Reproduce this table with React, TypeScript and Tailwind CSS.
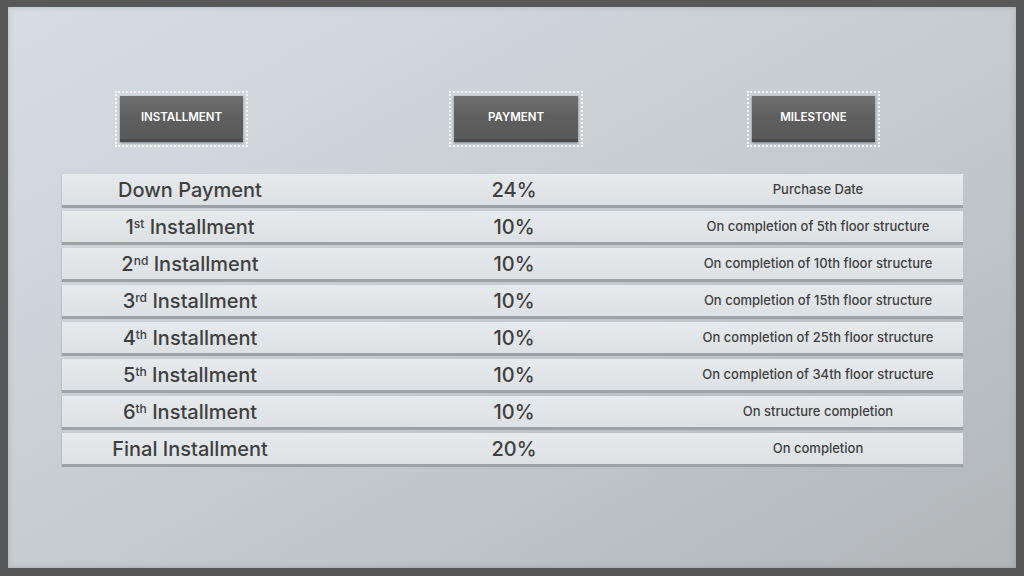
import React from "react";

type Row = {
  num?: string;
  sup?: string;
  label: string;
  payment: string;
  milestone: string;
};

const rows: Row[] = [
  { label: "Down Payment", payment: "24%", milestone: "Purchase Date" },
  { num: "1", sup: "st", label: "Installment", payment: "10%", milestone: "On completion of 5th floor structure" },
  { num: "2", sup: "nd", label: "Installment", payment: "10%", milestone: "On completion of 10th floor structure" },
  { num: "3", sup: "rd", label: "Installment", payment: "10%", milestone: "On completion of 15th floor structure" },
  { num: "4", sup: "th", label: "Installment", payment: "10%", milestone: "On completion of 25th floor structure" },
  { num: "5", sup: "th", label: "Installment", payment: "10%", milestone: "On completion of 34th floor structure" },
  { num: "6", sup: "th", label: "Installment", payment: "10%", milestone: "On structure completion" },
  { label: "Final Installment", payment: "20%", milestone: "On completion" },
];

const HeaderButton = ({ label, className }: { label: string; className: string }) => (
  <div className={`border-2 border-dotted border-[#f4f4f4] p-[3px] ${className}`}>
    <div className="flex h-[46px] items-center justify-center border-b-[3px] border-[#4a4a4a] bg-gradient-to-b from-[#707070] via-[#5e5e5e] to-[#5a5a5a] shadow-[0_1px_2px_rgba(0,0,0,0.4)]">
      <span className="text-[11.5px] font-semibold text-white">{label}</span>
    </div>
  </div>
);

export default function App() {
  return (
    <div
      className="h-[576px] w-[1024px] bg-[#585858] pb-2 pl-2 pr-2 pt-[7px]"
      style={{ fontFamily: "Inter, 'Open Sans', sans-serif" }}
    >
      <div className="h-full w-full bg-gradient-to-br from-[#d7dee3] via-[#c7ccd0] to-[#b2b6b9] shadow-[inset_0_0_6px_rgba(0,0,0,0.15)]">
        {/* Header buttons */}
        <div className="flex pt-[84px]">
          <HeaderButton label="INSTALLMENT" className="ml-[107px] w-[133px]" />
          <HeaderButton label="PAYMENT" className="ml-[201px] w-[134px]" />
          <HeaderButton label="MILESTONE" className="ml-[164px] w-[133px]" />
        </div>

        {/* Rows */}
        <div className="ml-[54px] mt-[27px] flex w-[901px] flex-col gap-[3px]">
          {rows.map((row, i) => (
            <div
              key={i}
              className="grid h-[34px] grid-cols-[256px_392px_216px] items-center border-b-[3px] border-[#9da2a6] bg-gradient-to-b from-[#e6eaed] to-[#dde1e4] text-[#3f3f3f] shadow-[-1px_0_1px_rgba(0,0,0,0.08)]"
            >
              <div className="flex justify-center whitespace-nowrap text-[20px] font-medium">
                {row.num ? (
                  <span>
                    {row.num}
                    <sup className="text-[12px]">{row.sup}</sup> {row.label}
                  </span>
                ) : (
                  <span>{row.label}</span>
                )}
              </div>
              <div className="flex justify-center text-[20px] font-medium">{row.payment}</div>
              <div className="flex justify-center whitespace-nowrap pt-[1px] text-[13px] font-medium">
                {row.milestone}
              </div>
            </div>
          ))}
        </div>
      </div>
    </div>
  );
}
